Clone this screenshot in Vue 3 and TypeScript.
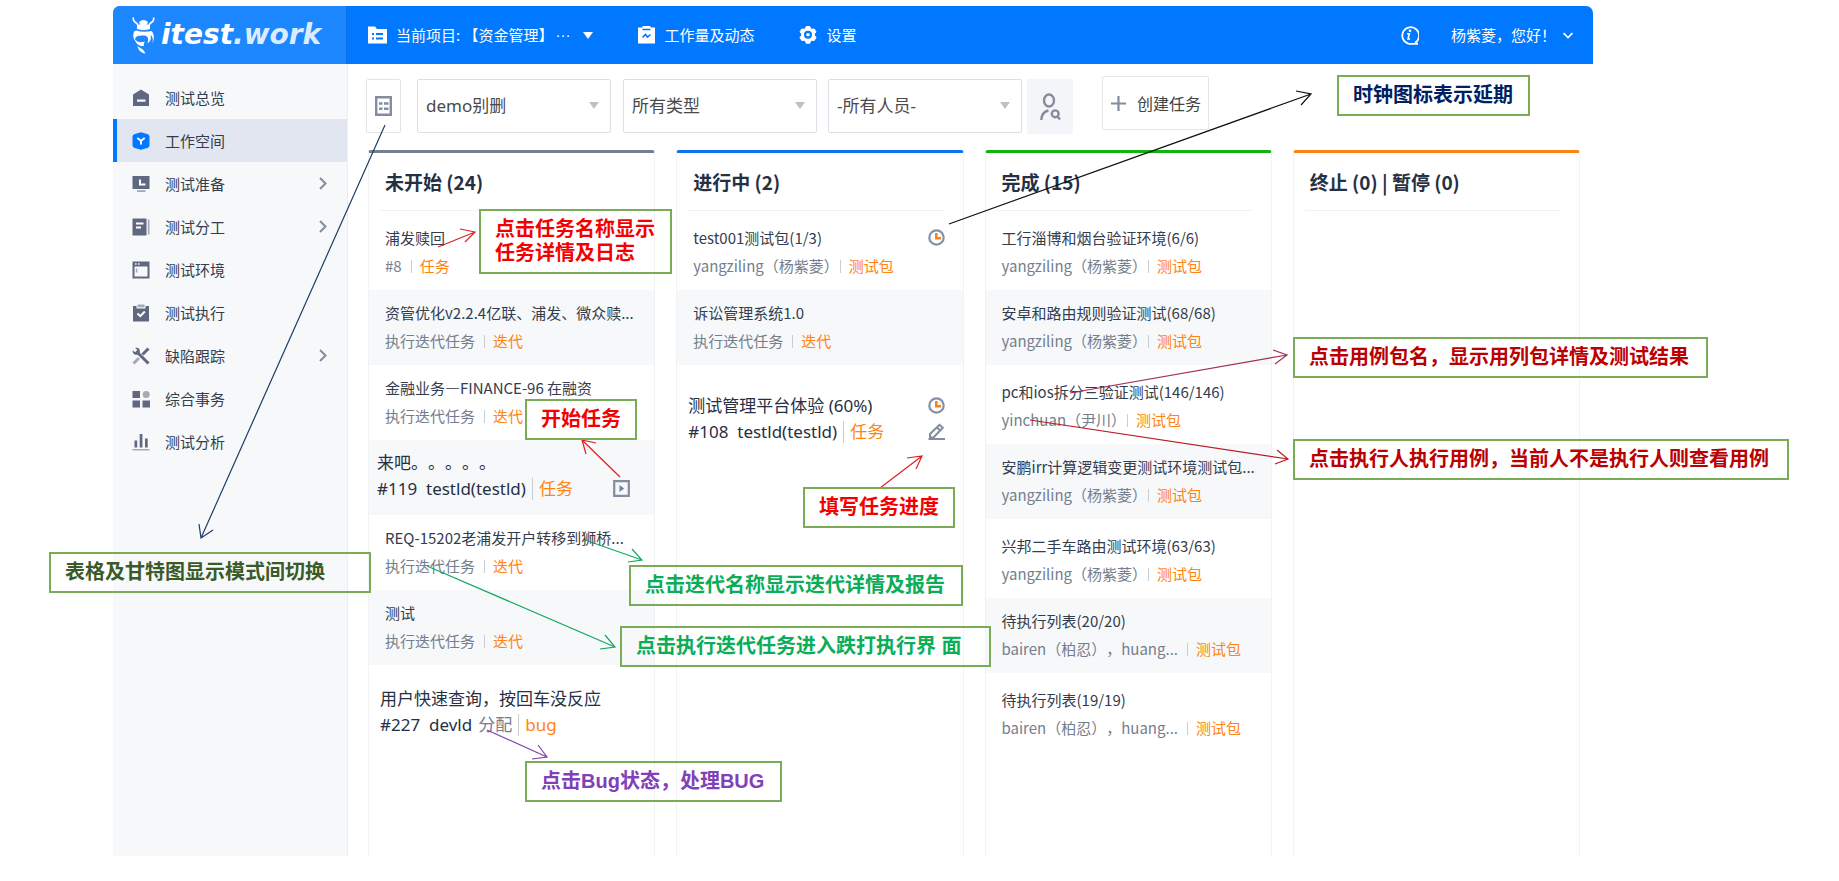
<script setup lang="ts">
interface Shape {
  d: string
  kind?: 'soft' | 'line' | 'cut' | 'softline'
}
interface NavItem {
  label: string
  active?: boolean
  expandable?: boolean
  icon: Shape[]
}
interface Card {
  title: string
  owner: string
  state?: string
  kind: string
  user?: boolean
  large?: boolean
  space?: 'roomy' | 'wide' | 'lead' | 'lead-wide'
  clock?: boolean
  action?: 'play' | 'edit'
}
interface Column {
  title: string
  tone: string
  cards: Card[]
}
interface Note {
  id: string
  lines: string[]
}
interface Arrow {
  tone: string
  d: string
}

const nav: NavItem[] = [
  { label: '测试总览', icon: [{ d: 'M1 5.5 9 .5l8 5V17H1zM5 10.500v2.200h8.500v-2.200z' }] },
  {
    label: '工作空间',
    active: true,
    icon: [{ d: 'M9 .3 16 2.300 17.500 4v10l-1.500 1.700-7 2-7-2L.5 14V4L2 2.300z' }, { d: 'M5.300 6 9 8.700 12.700 6M9 8.500v4', kind: 'cut' }],
  },
  {
    label: '测试准备',
    expandable: true,
    icon: [{ d: 'M.5 1h17v13H.5z' }, { d: 'M8 4.500v5h5.500', kind: 'cut' }, { d: 'M5 15.200h8.500v1.800H5z', kind: 'soft' }],
  },
  {
    label: '测试分工',
    expandable: true,
    icon: [{ d: 'M.5.5h14v17H.5z' }, { d: 'M4 5.500h7.500M4 9.500h5', kind: 'cut' }, { d: 'M15.800 1.500h1.700v15h-1.700z', kind: 'soft' }],
  },
  {
    label: '测试环境',
    icon: [{ d: 'M.5.5h17v17H.5zM2.500 5.500v10h13v-10zM3 2.200v1.600h1.600V2.200zM6 2.200v1.600h1.600V2.200z' }, { d: 'M3.800 7.500h1.600v4H3.800z', kind: 'soft' }],
  },
  {
    label: '测试执行',
    icon: [{ d: 'M1 2h3.500v2.500h9V2H17v15.500H1z' }, { d: 'M5.500 9.500 8.300 12.200 12.800 7.500', kind: 'cut' }, { d: 'M5.500.5h7v2.800h-7z', kind: 'soft' }],
  },
  {
    label: '缺陷跟踪',
    expandable: true,
    icon: [
      { d: 'M1.500 16.500 7 11', kind: 'softline' },
      { d: 'M10.500 7.500 16.500 1.500M5 5l11.500 11.500', kind: 'line' },
      { d: 'M.8 3.200 3 5.300l2.300-2.200L3.200 1C6.200.2 8.500 2.500 7.700 5.400L5.400 7.700C2.500 8.500.2 6.200.8 3.200z' },
    ],
  },
  {
    label: '综合事务',
    icon: [{ d: 'M.5 1H8v7H.5zM.5 10.500H8v7H.5zM10.500 10.500H18v7h-7.500z' }, { d: 'M14.200 1a3.500 3.500 0 1 1 0 7 3.500 3.500 0 0 1 0-7z', kind: 'soft' }],
  },
  {
    label: '测试分析',
    icon: [{ d: 'M2.500 7.500h2.700v7H2.500zM7.700 1h2.700v13.500H7.700zM13 5.500h2.700v9H13z' }, { d: 'M.5 16h17v1.500H.5z', kind: 'soft' }],
  },
]

const columns: Column[] = [
  {
    title: '未开始 (24)',
    tone: 'slate',
    cards: [
      { title: '浦发赎回', owner: '#8', kind: '任务', space: 'roomy' },
      { title: '资管优化v2.2.4亿联、浦发、微众赎...', owner: '执行迭代任务', kind: '迭代' },
      { title: '金融业务—FINANCE-96 在融资', owner: '执行迭代任务', kind: '迭代' },
      { title: '来吧。。。。。', owner: '#119  testld(testld)', kind: '任务', large: true, space: 'wide', action: 'play' },
      { title: 'REQ-15202老浦发开户转移到狮桥...', owner: '执行迭代任务', kind: '迭代' },
      { title: '测试', owner: '执行迭代任务', kind: '迭代' },
      { title: '用户快速查询，按回车没反应', owner: '#227  devld', state: '分配', kind: 'bug', large: true, space: 'lead' },
    ],
  },
  {
    title: '进行中 (2)',
    tone: 'blue',
    cards: [
      { title: 'test001测试包(1/3)', owner: 'yangziling（杨紫菱）', user: true, kind: '测试包', space: 'roomy', clock: true },
      { title: '诉讼管理系统1.0', owner: '执行迭代任务', kind: '迭代' },
      { title: '测试管理平台体验 (60%)', owner: '#108  testld(testld)', kind: '任务', large: true, space: 'lead-wide', clock: true, action: 'edit' },
    ],
  },
  {
    title: '完成 (15)',
    tone: 'green',
    cards: [
      { title: '工行淄博和烟台验证环境(6/6)', owner: 'yangziling（杨紫菱）', user: true, kind: '测试包', space: 'roomy' },
      { title: '安卓和路由规则验证测试(68/68)', owner: 'yangziling（杨紫菱）', user: true, kind: '测试包' },
      { title: 'pc和ios拆分三验证测试(146/146)', owner: 'yinchuan（尹川）', user: true, kind: '测试包', space: 'roomy' },
      { title: '安鹏irr计算逻辑变更测试环境测试包...', owner: 'yangziling（杨紫菱）', user: true, kind: '测试包' },
      { title: '兴邦二手车路由测试环境(63/63)', owner: 'yangziling（杨紫菱）', user: true, kind: '测试包', space: 'roomy' },
      { title: '待执行列表(20/20)', owner: 'bairen（柏忍），huang...', kind: '测试包' },
      { title: '待执行列表(19/19)', owner: 'bairen（柏忍），huang...', kind: '测试包', space: 'roomy' },
    ],
  },
  { title: '终止 (0) | 暂停 (0)', tone: 'orange', cards: [] },
]

const notes: Note[] = [
  { id: 'clock', lines: ['时钟图标表示延期'] },
  { id: 'name', lines: ['点击任务名称显示', '任务详情及日志'] },
  { id: 'start', lines: ['开始任务'] },
  { id: 'progress', lines: ['填写任务进度'] },
  { id: 'iteration', lines: ['点击迭代名称显示迭代详情及报告'] },
  { id: 'run', lines: ['点击执行迭代任务进入跌打执行界 面'] },
  { id: 'bug', lines: ['点击Bug状态，处理BUG'] },
  { id: 'mode-switch', lines: ['表格及甘特图显示模式间切换'] },
  { id: 'pack', lines: ['点击用例包名，显示用列包详情及测试结果'] },
  { id: 'executor', lines: ['点击执行人执行用例，当前人不是执行人则查看用例'] },
]

const arrows: Arrow[] = [
  { tone: '#111111', d: 'M949 224 1311 94M1296 91 1311 94 1301 105' },
  { tone: '#1f3f66', d: 'M385 125 201 538M199 524 201 538 213 530' },
  { tone: '#e02020', d: 'M438 247 475 232M460 229 475 232 465 242' },
  { tone: '#e02020', d: 'M620 477 582 440M596 443 582 440 586 454' },
  { tone: '#e02020', d: 'M880 488 922 456M907 458 922 456 916 469' },
  { tone: '#12a860', d: 'M585 540 642 560M632 549 642 560 628 562' },
  { tone: '#12a860', d: 'M427 566 615 647M605 635 615 647 600 649' },
  { tone: '#8040b0', d: 'M487 730 547 757M538 745 547 757 532 759' },
  { tone: '#a03050', d: 'M1070 393 1287 355M1273 350 1287 355 1275 364' },
  { tone: '#b81c24', d: 'M1030 420 1288 459M1277 450 1288 459 1275 464' },
]
</script>

<template>
  <div class="page" lang="zh-CN">
    <div class="app">
      <header class="topbar">
        <a class="brand" href="#" aria-label="itest.work">
          <svg class="beetle" viewBox="0 0 24 37" aria-hidden="true">
            <path d="M1.500 .5C0 5 4 4.500 6 8M21.500.5C23 5 19 4.500 17 8" fill="none" stroke="#fff" stroke-width="1.600" />
            <path d="M7 5.500C8.500 2 14.500 2 16 5.500L15 7H8z" fill="#fff" />
            <path d="M5 8C8 6.500 15 6.500 18 8V12C14 13.500 9 13.500 5 12z" fill="#fff" />
            <path d="M2 14.500C1 18 1 20 2.500 23.500 4 18 6 19 10 18.500 15 18 17.500 20 15.500 26.500 18.500 24 19.500 22 18.500 17.500 21 20 21.500 23 20 26.500 22.500 23 22.500 17 19.500 14 14 15 9 15 4.500 13.500z" fill="#fff" />
            <path d="M2.500 21.500C5 25.500 9 26 13 24.500 11.500 26.500 11.500 27.500 12 29 7 29.500 3.500 26.500 2.500 21.500z" fill="#fff" />
            <path d="M5.500 29C8 31.500 11 31 13.500 36.500 9 36 6 33 5.500 29z" fill="#fff" />
          </svg>
          <span class="wordmark">itest<span class="wordmark-tail">.work</span></span>
        </a>
        <nav class="topnav">
          <button class="top-item project" type="button">
            <svg class="i19" viewBox="0 0 19 18" aria-hidden="true">
              <path d="M0 .5h7l2 2.500h10v14.500H0z" fill="#fff" />
              <path d="M4 8h2M8 8h7M4 12.500h2M8 12.500h7" stroke="#0078ff" stroke-width="2" />
            </svg>
            <span>当前项目: 【资金管理】</span>
            <span class="dots">···</span>
            <svg class="caret" viewBox="0 0 10 7" aria-hidden="true"><path d="M0 0h10L5 7z" fill="#fff" /></svg>
          </button>
          <a class="top-item work" href="#">
            <svg class="i17" viewBox="0 0 17 18" aria-hidden="true">
              <path d="M4.500 0h8v1.500H17v16H0v-16h4.500z" fill="#fff" />
              <path d="M4.500 3.500h8M4.500 11.500 7.500 8.500 9.500 11 12.500 8.500" fill="none" stroke="#0078ff" stroke-width="1.600" />
            </svg>
            <span>工作量及动态</span>
          </a>
          <a class="top-item setup" href="#">
            <svg class="i18" viewBox="0 0 18 18" aria-hidden="true">
              <path d="M6.500 2.500 7.200.5h3.600l.7 2 1.500.8 2.200-.4 1.800 3-1.500 1.700v1.800L17 11.500l-1.800 3-2.200-.3-1.500.8-.7 2.200H7.200L6.500 15 5 14.200l-2.200.3-1.800-3 1.500-1.900V7.700L1 5.900l1.800-3 2.200.4z" fill="#fff" stroke="#fff" stroke-linejoin="round" />
              <circle cx="9" cy="8.800" r="2.900" fill="none" stroke="#0078ff" stroke-width="2.200" />
            </svg>
            <span>设置</span>
          </a>
        </nav>
        <button class="info" type="button" aria-label="帮助">
          <svg viewBox="0 0 20 20" aria-hidden="true">
            <path d="M16 17.800a8.400 8.400 0 1 0-6 1H19M16 17.500l2.500 1.300" fill="none" stroke="#fff" stroke-width="1.800" />
            <path d="M8 8.800h2.300L9 14h2.200" fill="none" stroke="#fff" stroke-width="1.600" />
            <circle cx="11" cy="5.800" r="1.300" fill="#fff" />
          </svg>
        </button>
        <button class="account" type="button">
          <span>杨紫菱，您好！</span>
          <svg viewBox="0 0 10 7" aria-hidden="true"><path d="M.5 1 5 5.500 9.500 1" fill="none" stroke="#fff" stroke-width="1.700" /></svg>
        </button>
      </header>

      <div class="body">
        <nav class="sidebar">
          <a v-for="item in nav" :key="item.label" href="#" class="nav-item" :class="{ active: item.active }">
            <svg class="nav-icon" viewBox="0 0 18 18" aria-hidden="true">
              <path v-for="(s, i) in item.icon" :key="i" :d="s.d" :class="s.kind ?? 'solid'" fill-rule="evenodd" />
            </svg>
            <span>{{ item.label }}</span>
            <svg v-if="item.expandable" class="chevron" viewBox="0 0 8 13" aria-hidden="true">
              <path d="M1 1 6.500 6.500 1 12" fill="none" stroke="#858c9c" stroke-width="2" />
            </svg>
          </a>
        </nav>

        <main class="main">
          <div class="toolbar">
            <div class="filters">
              <button class="mode" type="button" aria-label="切换显示模式">
                <svg viewBox="0 0 17 20" aria-hidden="true">
                  <path d="M1.200 1.200h14.600v17.600H1.200z" fill="none" stroke="#858ba0" stroke-width="2.400" />
                  <path d="M4 7.500h3.500M9 7.500h4.500M4 12.800h3.500M9 12.800h4.500" stroke="#858ba0" stroke-width="2.600" />
                </svg>
              </button>
              <div class="picker">
                <select aria-label="项目"><option>demo别删</option></select>
                <svg viewBox="0 0 10 7" aria-hidden="true"><path d="M0 0h10L5 7z" /></svg>
              </div>
              <div class="picker type">
                <select aria-label="类型"><option>所有类型</option></select>
                <svg viewBox="0 0 10 7" aria-hidden="true"><path d="M0 0h10L5 7z" /></svg>
              </div>
              <div class="picker people">
                <select aria-label="人员"><option>-所有人员-</option></select>
                <svg viewBox="0 0 10 7" aria-hidden="true"><path d="M0 0h10L5 7z" /></svg>
              </div>
              <button class="find" type="button" aria-label="查找人员">
                <svg viewBox="0 0 21 28" aria-hidden="true">
                  <g fill="none" stroke="#858ba0" stroke-width="2.400">
                    <ellipse cx="9" cy="7.500" rx="5" ry="6" />
                    <path d="M1.300 27C1.500 21.500 4 18.500 8.500 17.500" />
                    <circle cx="15.200" cy="20.800" r="3.400" />
                    <path d="m17.500 23.500 2.500 3" />
                  </g>
                </svg>
              </button>
            </div>
            <button class="create" type="button">
              <svg viewBox="0 0 15 15" aria-hidden="true"><path d="M7.500 0v15M0 7.500h15" stroke="#858ba0" stroke-width="2.200" /></svg>
              <span>创建任务</span>
            </button>
          </div>

          <div class="board">
            <section v-for="col in columns" :key="col.title" class="column" :class="col.tone">
              <h2>{{ col.title }}</h2>
              <article
                v-for="card in col.cards"
                :key="card.title"
                class="card"
                :class="[card.space, { large: card.large }]"
              >
                <div class="text">
                  <a class="title" href="#">{{ card.title }}</a>
                  <div class="meta">
                    <a class="owner" :class="{ user: card.user }" href="#">{{ card.owner }}</a>
                    <a v-if="card.state" class="state" href="#">{{ card.state }}</a>
                    <span class="kind">{{ card.kind }}</span>
                  </div>
                </div>
                <div v-if="card.clock || card.action" class="tools">
                  <svg v-if="card.clock" class="tool" viewBox="0 0 17 17" aria-hidden="true">
                    <circle cx="8.500" cy="8.500" r="7.200" fill="none" stroke="#8790a4" stroke-width="2.200" />
                    <path d="M8.300 4v5.300h4.700" fill="none" stroke="#ff7f0e" stroke-width="2.600" />
                  </svg>
                  <button v-if="card.action === 'edit'" type="button" aria-label="填写进度">
                    <svg class="tool" viewBox="0 0 17 17" aria-hidden="true">
                      <path d="M2 14.500V11L11.500 1.800l3.300 3L5.500 14.500zM9 4.500l3.200 3" fill="none" stroke="#858ba0" stroke-width="2" />
                      <path d="M.5 16h16.500" stroke="#858ba0" stroke-width="2" />
                    </svg>
                  </button>
                  <button v-if="card.action === 'play'" type="button" aria-label="开始">
                    <svg class="tool" viewBox="0 0 17 17" aria-hidden="true">
                      <path d="M1.200 1.200h14.600v14.600H1.200z" fill="none" stroke="#858ba0" stroke-width="2.200" />
                      <path d="M6.500 5v7l4.700-3.500z" fill="#7480a0" />
                    </svg>
                  </button>
                </div>
              </article>
            </section>
          </div>
        </main>
      </div>
    </div>

    <svg class="arrows" aria-hidden="true">
      <path v-for="a in arrows" :key="a.d" :d="a.d" :stroke="a.tone" fill="none" stroke-width="1.200" />
    </svg>
    <aside v-for="note in notes" :key="note.id" class="note" :class="note.id">
      <div v-for="line in note.lines" :key="line">{{ line }}</div>
    </aside>
  </div>
</template>

<style>
body {
  margin: 0;
  background: #fff;
}
</style>

<style scoped>
* {
  box-sizing: border-box;
}
.page {
  position: relative;
  display: flex;
  min-height: 100vh;
  padding: 6px 246px 25px 113px;
  overflow: hidden;
  font: 15px/28px 'Noto Sans CJK SC', sans-serif;
  text-spacing-trim: space-all;
  color: #333d4d;
}
a {
  color: inherit;
  text-decoration: none;
}
button {
  margin: 0;
  padding: 0;
  border: 0;
  background: none;
  font: inherit;
  color: inherit;
}
svg {
  display: block;
  flex: none;
}
.app {
  flex: 1;
  min-width: 0;
  display: flex;
  flex-direction: column;
}
.topbar {
  display: flex;
  align-items: center;
  height: 58px;
  border-radius: 7px 7px 0 0;
  overflow: hidden;
  background: #0078ff;
  color: #fff;
}
.brand {
  display: flex;
  align-items: center;
  gap: 5px;
  align-self: stretch;
  width: 234px;
  padding-left: 19px;
  background: #1d87ff;
  border-right: 1px solid #0d70e6;
}
.beetle {
  width: 24px;
  height: 37px;
}
.wordmark {
  font: italic bold 28px/36px 'DejaVu Sans', sans-serif;
}
.wordmark-tail {
  color: #dcecff;
}
.topnav {
  flex: 1;
  display: flex;
  align-items: center;
  padding-left: 21px;
}
.top-item {
  display: flex;
  align-items: center;
  gap: 10px;
  white-space: nowrap;
}
.project {
  gap: 9px;
}
.i19 {
  width: 19px;
  height: 18px;
}
.i17 {
  width: 17px;
  height: 18px;
}
.i18 {
  width: 18px;
  height: 18px;
}
.dots {
  margin-left: -7px;
  font-family: 'Liberation Sans', sans-serif;
}
.caret {
  width: 10px;
  height: 7px;
  margin-left: 3px;
}
.work {
  margin-left: 45px;
}
.setup {
  margin-left: 44px;
}
.info {
  margin-right: 32px;
}
.info svg {
  width: 20px;
  height: 20px;
}
.account {
  display: flex;
  align-items: center;
  gap: 7px;
  margin-right: 20px;
}
.account svg {
  width: 10px;
  height: 7px;
}
.body {
  flex: 1;
  display: flex;
}
.sidebar {
  width: 235px;
  flex: none;
  padding-top: 12px;
  background: #f6f8fa;
  border-right: 1px solid #eceef2;
}
.nav-item {
  display: flex;
  align-items: center;
  gap: 15px;
  height: 43px;
  padding: 0 20px 0 15px;
  border-left: 4px solid transparent;
}
.nav-item.active {
  background: #e1e6f1;
  border-color: #0078ff;
}
.nav-icon {
  width: 18px;
  height: 18px;
  color: #5f6880;
}
.active .nav-icon {
  color: #0078ff;
}
.solid {
  fill: currentColor;
}
.soft {
  fill: #a4aab8;
}
.cut,
.line,
.softline {
  fill: none;
  stroke: #fff;
  stroke-width: 2;
}
.line {
  stroke: currentColor;
  stroke-width: 3;
}
.softline {
  stroke: #a4aab8;
  stroke-width: 3;
}
.chevron {
  width: 8px;
  height: 13px;
  margin-left: auto;
}
.main {
  flex: 1;
  min-width: 0;
  display: flex;
  flex-direction: column;
  padding: 12px 13px 0 20px;
}
.toolbar {
  display: flex;
  align-items: flex-start;
  gap: 29px;
  height: 74px;
  margin-left: -2px;
}
.filters {
  display: flex;
  padding-top: 3px;
}
.mode {
  display: flex;
  align-items: center;
  justify-content: center;
  width: 35px;
  height: 54px;
  margin-right: 16px;
  border: 1px solid #e2e4e8;
  border-radius: 2px;
}
.mode svg {
  width: 17px;
  height: 20px;
}
.picker {
  position: relative;
  width: 194px;
}
.picker.type {
  margin: 0 11px 0 12px;
}
.picker select {
  appearance: none;
  width: 100%;
  height: 54px;
  padding: 0 28px 0 8px;
  border: 1px solid #dcdfe3;
  border-radius: 2px;
  background: #fff;
  font: 17px/24px 'Noto Sans', 'Noto Sans CJK SC', sans-serif;
  color: #4a4a4a;
}
.picker svg {
  position: absolute;
  top: 23px;
  right: 12px;
  width: 10px;
  height: 7px;
  fill: #bfc2c5;
}
.find {
  display: flex;
  align-items: center;
  justify-content: center;
  width: 46px;
  height: 55px;
  margin-left: 5px;
  background: #f3f5f8;
}
.find svg {
  width: 21px;
  height: 28px;
}
.create {
  display: flex;
  align-items: center;
  gap: 11px;
  height: 54px;
  padding: 0 7px 0 8px;
  border: 1px solid #e4e6e9;
  border-radius: 2px;
  font-size: 16px;
  color: #444;
  white-space: nowrap;
}
.create svg {
  width: 15px;
  height: 15px;
}
.board {
  flex: 1;
  display: grid;
  grid-template-columns: repeat(4, minmax(0, 1fr));
  gap: 21px;
}
.column {
  border: 1px solid #f1f2f4;
  border-top: 3px solid #738091;
  border-bottom: 0;
  border-radius: 3px 3px 0 0;
}
.column.blue {
  border-top-color: #0f73ec;
}
.column.green {
  border-top-color: #12b312;
}
.column.orange {
  border-top-color: #f58518;
}
h2 {
  height: 58px;
  margin: 0 18px 0 11px;
  padding: 0 0 0 5px;
  border-bottom: 1px solid #f1f2f4;
  font-size: 19px;
  line-height: 58px;
  font-weight: 700;
  color: #263044;
  white-space: nowrap;
}
.card {
  display: flex;
  justify-content: space-between;
  padding: 9px 18px 10px 16px;
  white-space: nowrap;
}
.card:nth-of-type(even) {
  background: #f6f8fa;
}
.card.roomy {
  padding-top: 13px;
}
.title {
  display: block;
}
.meta {
  display: flex;
  align-items: center;
  color: #757e8c;
}
.owner {
  margin-right: 9px;
  white-space: pre;
}
.owner.user {
  margin-right: 1px;
}
.kind {
  display: flex;
  align-items: center;
  color: #ff8412;
}
.kind::before {
  content: '';
  width: 1px;
  height: 13px;
  margin-right: 8px;
  background: #c9cdd4;
}
.tools {
  display: flex;
  flex-direction: column;
  align-items: center;
}
.tool {
  width: 17px;
  height: 17px;
  margin: 5px 0;
}
.large {
  padding: 10px 18px 13px 11px;
  font: 17px/26px 'Noto Sans', 'Noto Sans CJK SC', sans-serif;
  color: #263044;
}
.large.wide {
  padding-right: 24px;
  padding-left: 8px;
}
.large.lead {
  padding-top: 21px;
}
.large.lead-wide {
  padding-top: 28px;
}
.large .owner {
  margin-right: 6px;
  color: #263044;
}
.large .state {
  margin-right: 6px;
}
.large .kind::before {
  height: 22px;
  margin-right: 6px;
}
.large .tool {
  margin: 4px 0 5px;
}
.large .tools {
  justify-content: flex-end;
}
.arrows {
  position: absolute;
  inset: 0;
  width: 100%;
  height: 100%;
  pointer-events: none;
}
.note {
  position: absolute;
  padding: 6px 14px 7px;
  border: 2px solid #7aab57;
  font: bold 20px/24px 'Liberation Sans', 'Noto Sans CJK SC', sans-serif;
  white-space: nowrap;
  pointer-events: none;
}
.note.clock {
  left: 1337px;
  top: 75px;
  width: 193px;
  color: #002060;
}
.note.name {
  left: 479px;
  top: 209px;
  width: 193px;
  color: #f50000;
}
.note.start {
  left: 525px;
  top: 399px;
  width: 112px;
  color: #f50000;
}
.note.progress {
  left: 803px;
  top: 487px;
  width: 152px;
  color: #f50000;
}
.note.iteration {
  left: 629px;
  top: 565px;
  width: 334px;
  color: #0aad58;
}
.note.run {
  left: 620px;
  top: 626px;
  width: 371px;
  color: #0aad58;
}
.note.bug {
  left: 525px;
  top: 761px;
  width: 257px;
  color: #8140b8;
}
.note.mode-switch {
  left: 49px;
  top: 552px;
  width: 322px;
  color: #3c5a28;
}
.note.pack {
  left: 1293px;
  top: 337px;
  width: 415px;
  color: #bb0000;
}
.note.executor {
  left: 1293px;
  top: 439px;
  width: 496px;
  color: #bb0000;
}
</style>
